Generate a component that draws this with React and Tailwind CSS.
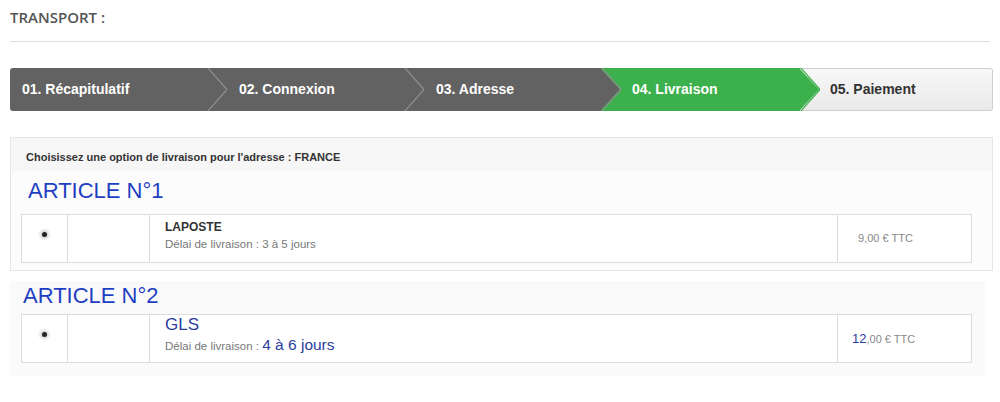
import React from "react";

/* checkout steps: label, bar colour, text colour */
const steps = [
  { label: "01. Récapitulatif", fill: "#626262", text: "text-white", w: "w-[197px]", pl: "pl-[12px]" },
  { label: "02. Connexion", fill: "#626262", text: "text-white", w: "w-[197px]", pl: "pl-[32px]" },
  { label: "03. Adresse", fill: "#626262", text: "text-white", w: "w-[197px]", pl: "pl-[32px]" },
  { label: "04. Livraison", fill: "#3cb04c", text: "text-white", w: "w-[199px]", pl: "pl-[31px]" },
];

function Arrow({ fill, line }) {
  return (
    <svg
      className="absolute top-0 right-[-20px] h-[43px] w-[21px]"
      viewBox="0 0 21 43"
      preserveAspectRatio="none"
    >
      <polygon points="0,0 20,21.5 0,43" fill={fill} />
      <polyline points="1,-1 21,21.5 1,44" fill="none" stroke={line} strokeWidth="1.2" />
    </svg>
  );
}

function StepBar() {
  return (
    <div className="flex h-[43px] w-[983px] font-['Liberation_Sans',Arial,sans-serif] text-[14px] font-bold">
      {steps.map((s, i) => (
        <div
          key={s.label}
          className={`relative flex items-center ${s.w} ${s.pl} ${s.text} ${i === 0 ? "rounded-l-[3px]" : ""}`}
          style={{ backgroundColor: s.fill, zIndex: 10 - i }}
        >
          {s.label}
          <Arrow fill={s.fill} line={i === 3 ? "#3cb04c" : "#8f8f8f"} />
        </div>
      ))}
      <div className="flex flex-1 items-center pl-[30px] text-[#333] bg-gradient-to-b from-[#f8f8f8] to-[#e9e9e9] border-y border-r border-[#cfcfcf] rounded-r-[3px]">
        05. Paiement
      </div>
    </div>
  );
}

function OptionRow({ name, delay, price }) {
  return (
    <div className="flex h-[49px] w-[951px] border border-[#dcdcdc] bg-white">
      <div className="flex w-[45px] justify-center pt-[17px]">
        <span className="h-[5px] w-[5px] rounded-full bg-[#222] shadow-[0_0_3px_2px_rgba(0,0,0,0.18)]" />
      </div>
      <div className="w-[82px] border-l border-[#dcdcdc]" />
      <div className="w-[688px] border-l border-[#dcdcdc] pl-[15px]">{name}{delay}</div>
      <div className="flex flex-1 items-center border-l border-[#dcdcdc]">{price}</div>
    </div>
  );
}

export default function App() {
  return (
    <div className="h-[402px] w-[1000px] overflow-hidden bg-white px-[10px] font-['Liberation_Sans',Arial,sans-serif]">
      {/* title */}
      <div className="h-[42px] w-[980px] border-b border-[#dedede] pt-[8px]">
        <h2 className="font-['Open_Sans',sans-serif] text-[15px] font-semibold leading-[18px] text-[#555]">
          TRANSPORT :
        </h2>
      </div>

      <div className="mt-[26px]">
        <StepBar />
      </div>

      {/* delivery options */}
      <div className="mt-[26px] w-[983px] border border-[#e6e6e6]">
        <div className="h-[33px] bg-[#f6f6f6] pl-[15px] pt-[12px] text-[11px] font-bold leading-[14px] text-[#333]">
          Choisissez une option de livraison pour l'adresse : FRANCE
        </div>
        <div className="bg-[#fcfcfc] pt-[7px] pb-[7px] pl-[10px]">
          <h3 className="pl-[7px] text-[22px] leading-[26px] text-[#1f3fc2]">ARTICLE N°1</h3>
          <div className="mt-[10px]">
            <OptionRow
              name={<div className="pt-[4px] text-[12px] font-bold leading-[17px] text-[#333]">LAPOSTE</div>}
              delay={<div className="text-[11.5px] leading-[17px] text-[#777]">Délai de livraison : 3 à 5 jours</div>}
              price={<span className="pl-[20px] text-[11px] text-[#888]">9,00 € TTC</span>}
            />
          </div>
        </div>
      </div>

      <div className="mt-[10px] w-[975px] bg-[#fafafa] pt-[2px] pb-[13px] pl-[11px]">
        <h3 className="pl-[2px] text-[22px] leading-[26px] text-[#1f3fc2]">ARTICLE N°2</h3>
        <div className="mt-[5px]">
          <OptionRow
            name={<div className="text-[17px] leading-[20px] text-[#2b3d9e]">GLS</div>}
            delay={
              <div className="leading-[20px]">
                <span className="text-[11.5px] text-[#777]">Délai de livraison : </span>
                <span className="text-[15.5px] text-[#2b3d9e]">4 à 6 jours</span>
              </div>
            }
            price={
              <span className="pl-[14px] text-[11px] text-[#888]">
                <span className="text-[13px] text-[#2b3d9e]">12</span>,00 € TTC
              </span>
            }
          />
        </div>
      </div>
    </div>
  );
}
